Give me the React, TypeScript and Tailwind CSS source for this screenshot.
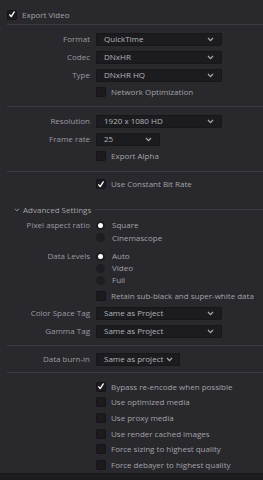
import React from "react";

function Chevron() {
  return (
    <svg viewBox="0 0 7 5" className="w-[7px] h-[5px] shrink-0">
      <path d="M1 1 L3.5 3.6 L6 1" stroke="#a9a9ae" strokeWidth="1.2" fill="none" />
    </svg>
  );
}

function Box({ checked }: { checked?: boolean }) {
  return (
    <div className="w-[10px] h-[10px] rounded-[1.5px] bg-[#1b1b1f] border border-[#151518] flex items-center justify-center shrink-0">
      {checked && (
        <svg viewBox="0 0 10 10" className="w-[9px] h-[9px]">
          <path d="M2.2 5.4 L4 7.6 L7.8 1.8" stroke="#ffffff" strokeWidth="1.7" fill="none" strokeLinecap="round" strokeLinejoin="round" />
        </svg>
      )}
    </div>
  );
}

function Radio({ on }: { on?: boolean }) {
  return (
    <div className="w-[9px] h-[9px] rounded-full bg-[#1e1e22] flex items-center justify-center shrink-0">
      {on && <div className="w-[5px] h-[5px] rounded-full bg-white" />}
    </div>
  );
}

function Select({ value, w, compact }: { value: string; w: string; compact?: boolean }) {
  return (
    <div
      className={`${w} h-[13px] bg-[#1c1c20] border border-[#17171a] rounded-[1px] flex items-center whitespace-nowrap text-[#b3b3b8] ${
        compact ? "gap-[3px] pl-[7px] pr-[6px]" : "justify-between pl-[7px] pr-[7px]"
      }`}
    >
      <span className="leading-none">{value}</span>
      <Chevron />
    </div>
  );
}

function Field({ label, children, h }: { label?: string; children: React.ReactNode; h: string }) {
  return (
    <div className={`flex items-center ${h}`}>
      <div className="w-[90px] text-right text-[#9b9ba0] leading-none whitespace-nowrap">{label}</div>
      <div className="ml-[6px] flex items-center">{children}</div>
    </div>
  );
}

function Check({ label, checked, h }: { label: string; checked?: boolean; h: string }) {
  return (
    <Field h={h}>
      <Box checked={checked} />
      <span className="ml-[5px] text-[#a3a3a8] leading-none whitespace-nowrap">{label}</span>
    </Field>
  );
}

function RadioRow({ label, on, text, h }: { label?: string; on?: boolean; text: string; h: string }) {
  return (
    <Field label={label} h={h}>
      <Radio on={on} />
      <span className="ml-[7px] text-[#a3a3a8] leading-none whitespace-nowrap">{text}</span>
    </Field>
  );
}

function Line() {
  return <div className="ml-[7px] h-px bg-[#3a3a40]" />;
}

export default function App() {
  return (
    <div className="w-[263px] h-[480px] bg-[#28282d] font-['Open_Sans',sans-serif] text-[8px] overflow-hidden flex flex-col">
      <div className="h-[24px] flex items-center pl-[7px] pt-[5px]">
        <Box checked />
        <span className="ml-[5px] text-[#a3a3a8] leading-none">Export Video</span>
      </div>
      <Line />
      <div className="pt-[5px] pb-[6px] flex flex-col">
        <Field label="Format" h="h-[18px]">
          <Select value="QuickTime" w="w-[126px]" />
        </Field>
        <Field label="Codec" h="h-[18px]">
          <Select value="DNxHR" w="w-[126px]" />
        </Field>
        <Field label="Type" h="h-[18px]">
          <Select value="DNxHR HQ" w="w-[126px]" />
        </Field>
        <Check label="Network Optimization" h="h-[16px]" />
      </div>
      <Line />
      <div className="pt-[5px] pb-[7px] flex flex-col">
        <Field label="Resolution" h="h-[18px]">
          <Select value="1920 x 1080 HD" w="w-[126px]" />
        </Field>
        <Field label="Frame rate" h="h-[18px]">
          <Select value="25" w="w-[64px]" />
        </Field>
        <Check label="Export Alpha" h="h-[16px]" />
      </div>
      <Line />
      <div className="pt-[4px] flex flex-col">
        <Check label="Use Constant Bit Rate" checked h="h-[16px]" />
        <div className="mt-[10px] h-[16px] flex items-center pl-[14px]">
          <svg viewBox="0 0 7 5" className="w-[6px] h-[4px] shrink-0">
            <path d="M1 1 L3.5 3.6 L6 1" stroke="#a9a9ae" strokeWidth="1.1" fill="none" />
          </svg>
          <span className="ml-[3px] text-[#a3a3a8] leading-none whitespace-nowrap">Advanced Settings</span>
          <div className="flex-1 ml-[4px] h-px bg-[#3a3a40] -translate-y-[1px]" />
        </div>
        <div className="mt-[1px] flex flex-col">
          <RadioRow label="Pixel aspect ratio" on text="Square" h="h-[12px]" />
          <RadioRow text="Cinemascope" h="h-[13px]" />
        </div>
        <div className="mt-[6px] flex flex-col">
          <RadioRow label="Data Levels" on text="Auto" h="h-[12px]" />
          <RadioRow text="Video" h="h-[12px]" />
          <RadioRow text="Full" h="h-[12px]" />
        </div>
        <div className="mt-[2px]">
          <Check label="Retain sub-black and super-white data" h="h-[16px]" />
        </div>
        <Field label="Color Space Tag" h="h-[18px]">
          <Select value="Same as Project" w="w-[126px]" />
        </Field>
        <Field label="Gamma Tag" h="h-[18px]">
          <Select value="Same as Project" w="w-[126px]" />
        </Field>
      </div>
      <div className="h-[5px]" />
      <Line />
      <div className="pt-[4px] pb-[4px]">
        <Field label="Data burn-in" h="h-[18px]">
          <Select value="Same as project" w="w-auto" compact />
        </Field>
      </div>
      <Line />
      <div className="flex-1 pt-[6px] flex flex-col">
        <Check label="Bypass re-encode when possible" checked h="h-[15.6px]" />
        <Check label="Use optimized media" h="h-[15.6px]" />
        <Check label="Use proxy media" h="h-[15.6px]" />
        <Check label="Use render cached images" h="h-[15.6px]" />
        <Check label="Force sizing to highest quality" h="h-[15.6px]" />
        <Check label="Force debayer to highest quality" h="h-[15.6px]" />
      </div>
      <div className="h-[7px] bg-[#1d1d21] border-t border-[#18181b]" />
    </div>
  );
}
